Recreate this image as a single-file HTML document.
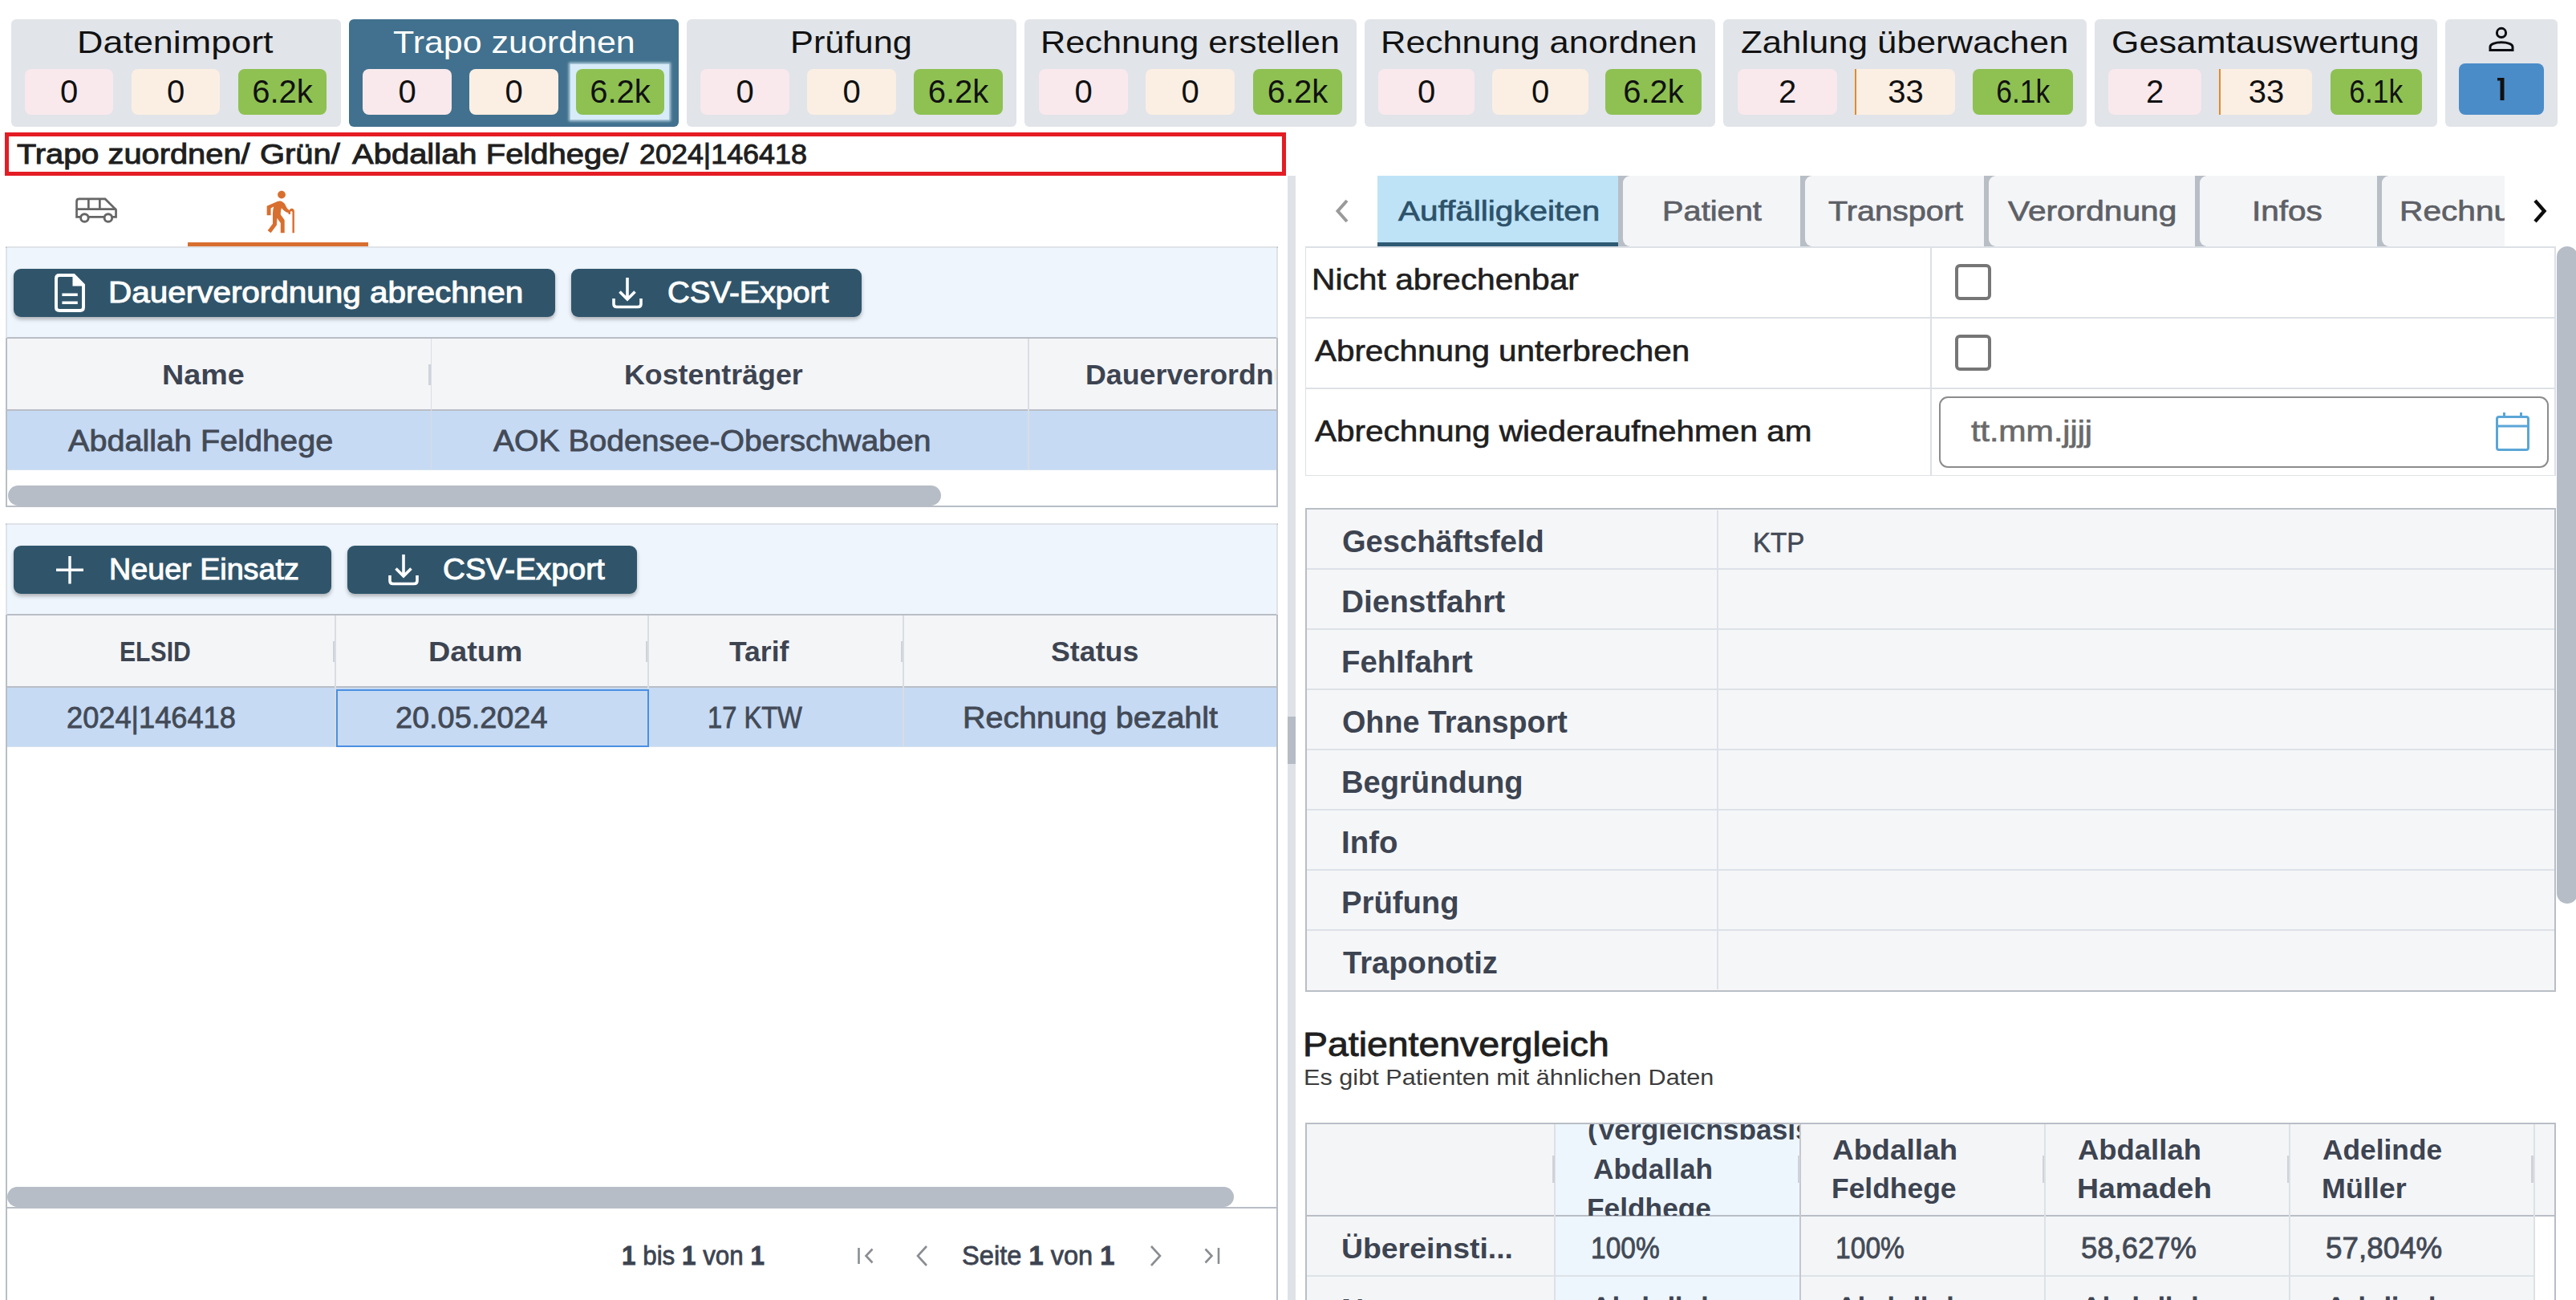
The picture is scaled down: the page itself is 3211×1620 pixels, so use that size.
<!DOCTYPE html>
<html><head><meta charset="utf-8">
<style>
html,body{margin:0;padding:0;background:#fff;width:3211px;height:1620px;overflow:hidden;position:relative;font-family:"Liberation Sans",sans-serif}
.b{position:absolute;box-sizing:border-box}
.t{position:absolute;white-space:nowrap;transform-origin:0 0;font-family:"Liberation Sans",sans-serif}
.card{position:absolute;top:24px;height:134px;background:#e1e4e9;border-radius:6px}
.pill{position:absolute;box-sizing:border-box;top:86px;height:57px;border-radius:8px;font-size:40px;line-height:57px;text-align:center;color:#111;font-family:"Liberation Sans",sans-serif}
.pk{background:#f9e9ec}.or{background:#fbefe3}.gr{background:#8ec152}
.btn{position:absolute;height:60px;background:#30556b;border-radius:9px;box-shadow:0 3px 5px rgba(0,0,0,0.28)}
.sb{position:absolute;background:#b6bdc6;border-radius:13px}
</style></head><body>
<!-- top cards -->
<div class="card" style="left:14px;width:411px"></div>
<div class="card" style="left:435px;width:411px;background:#41718e"></div>
<div class="card" style="left:856px;width:411px"></div>
<div class="card" style="left:1277px;width:414px"></div>
<div class="card" style="left:1701px;width:437px"></div>
<div class="card" style="left:2148px;width:453px"></div>
<div class="card" style="left:2611px;width:427px"></div>
<div class="card" style="left:3048px;width:140px"></div>
<!-- pills -->
<div class="pill pk" style="left:31px;width:110px">0</div>
<div class="pill or" style="left:164px;width:110px">0</div>
<div class="pill gr" style="left:297px;width:110px">6.2k</div>
<div class="pill pk" style="left:452px;width:111px">0</div>
<div class="pill or" style="left:585px;width:111px">0</div>
<div class="b" style="left:711px;top:80px;width:123px;height:69px;background:#d7ecf8;box-shadow:0 0 3px 2px rgba(215,236,248,0.8)"></div>
<div class="pill gr" style="left:718px;width:110px">6.2k</div>
<div class="pill pk" style="left:873px;width:111px">0</div>
<div class="pill or" style="left:1006px;width:111px">0</div>
<div class="pill gr" style="left:1139px;width:111px">6.2k</div>
<div class="pill pk" style="left:1295px;width:111px">0</div>
<div class="pill or" style="left:1428px;width:111px">0</div>
<div class="pill gr" style="left:1562px;width:111px">6.2k</div>
<div class="pill pk" style="left:1718px;width:120px">0</div>
<div class="pill or" style="left:1860px;width:120px">0</div>
<div class="pill gr" style="left:2001px;width:120px">6.2k</div>
<div class="pill pk" style="left:2166px;width:124px">2</div>
<div class="pill or" style="left:2312px;width:125px;border-left:2.5px solid #e08a2e;border-radius:0 8px 8px 0">33</div>
<div class="pill gr" style="left:2459px;width:125px"><span style="display:inline-block;transform:scaleX(0.886)">6.1k</span></div>
<div class="pill pk" style="left:2628px;width:116px">2</div>
<div class="pill or" style="left:2766px;width:116px;border-left:2.5px solid #e08a2e;border-radius:0 8px 8px 0">33</div>
<div class="pill gr" style="left:2905px;width:114px"><span style="display:inline-block;transform:scaleX(0.886)">6.1k</span></div>
<div class="pill" style="left:3065px;width:106px;top:79px;height:64px;line-height:64px;background:#4a8cc8"></div>
<svg class="b" style="left:3105px;top:92px" width="24" height="38" viewBox="0 0 24 38"><path d="M8 5 H16.5 V33 H11.5 V8.5 H8 Z" fill="#111"/></svg>
<!-- user icon -->
<svg class="b" style="left:3098px;top:30px" width="40" height="38" viewBox="0 0 40 38">
 <circle cx="20" cy="10.9" r="5.6" fill="none" stroke="#0b0d10" stroke-width="3"/>
 <path d="M6 32.5 V28.5 C6 25 12 22.8 20 22.8 C28 22.8 34 25 34 28.5 V32.5 Z" fill="none" stroke="#0b0d10" stroke-width="3" stroke-linejoin="miter"/>
</svg>
<!-- breadcrumb red box -->
<div class="b" style="left:6px;top:165px;width:1597px;height:54px;border:5px solid #e41c24"></div>
<!-- mode icons -->
<svg class="b" style="left:88px;top:240px" width="64" height="44" viewBox="0 0 64 44">
 <g fill="none" stroke="#666" stroke-width="2.7">
  <path d="M7.55 30.45 V11 Q7.55 7.95 10.6 7.95 H43.1 L56.55 21.4 V30.45 Z"/>
  <path d="M7.55 20.65 H56.55 M22.35 7.95 V20.65 M36.35 7.95 V20.65"/>
  <circle cx="17.4" cy="31.5" r="4.8" fill="#fff" stroke-width="2.9"/>
  <circle cx="46.9" cy="31.5" r="4.8" fill="#fff" stroke-width="2.9"/>
 </g>
</svg>
<svg class="b" style="left:318px;top:234px" width="58.7" height="58.7" viewBox="0 0 24 24">
 <path fill="#d86f2f" d="M13.5 5.5c1.1 0 2-.9 2-2s-.9-2-2-2-2 .9-2 2 .9 2 2 2zM20 12.5V23h-1V12.5c0-.28-.22-.5-.5-.5s-.5.22-.5.5v1h-1v-.69c-1.46-.38-2.7-1.29-3.51-2.52-.31.87-.49 1.78-.49 2.71 0 .23.02.46.03.69L15 16.5V23h-2v-5l-1.78-2.54L11 19l-3 4-1.6-1.2L9 18.33V13c0-1.15.18-2.29.5-3.39L8 10.46V14H6V9.3l5.4-2.35c.59-.26 1.25-.3 1.87-.11.9.28 1.66.91 2.06 1.76.34.72.81 2.1 2.17 2.87.08-.53.54-.97 1.1-.97.83 0 1.4.72 1.4 1.5z"/>
</svg>
<div class="b" style="left:234px;top:302px;width:225px;height:5px;background:#d86f2f"></div>

<!-- LEFT PANEL 1 -->
<div class="b" style="left:6.5px;top:307px;width:1586px;height:324.5px;border:2px solid #b8bec6;border-top-color:#dfe3e8;background:#fff"></div>
<div class="b" style="left:8.5px;top:309px;width:1582px;height:112px;background:#eef5fc"></div>
<div class="b" style="left:6.5px;top:309px;width:2px;height:112px;background:#dfe3e8"></div>
<div class="b" style="left:1590.5px;top:309px;width:2px;height:112px;background:#dfe3e8"></div>
<div class="b" style="left:8.5px;top:420px;width:1582px;height:92px;background:#f4f5f7;border-top:2px solid #b9bec6;border-bottom:2px solid #b9bec6"></div>
<div class="b" style="left:8.5px;top:512px;width:1582px;height:74px;background:#c6daf4;border-bottom:1px solid #d5e1ef"></div>
<div class="b" style="left:536.5px;top:422px;width:1.5px;height:164px;background:#d9dde3"></div>
<div class="b" style="left:1281px;top:422px;width:1.5px;height:164px;background:#d9dde3"></div>
<div class="b" style="left:534px;top:454px;width:2.5px;height:26px;background:#d0d4da"></div>
<div class="sb" style="left:10px;top:605px;width:1163px;height:25px"></div>
<div class="btn" style="left:17px;top:335px;width:675px"></div>
<div class="btn" style="left:712px;top:335px;width:362px"></div>
<!-- doc icon -->
<svg class="b" style="left:66px;top:339px" width="42" height="52" viewBox="0 0 42 52">
 <path d="M4 8 Q4 4 8 4 H26 L38 16 V44 Q38 48 34 48 H8 Q4 48 4 44 Z" fill="none" stroke="#fff" stroke-width="3.9" stroke-linejoin="miter"/>
 <path d="M24.5 3 V17.5 H39 V16 L26.5 3 Z" fill="#fff"/>
 <path d="M11.4 28.3 H30.8 M11.4 38.2 H30.8" stroke="#fff" stroke-width="3.6"/>
</svg>
<!-- download icon -->
<svg class="b" style="left:760px;top:344px" width="44" height="42" viewBox="0 0 44 42">
 <path d="M22 2 V29 M12.5 19.5 L22 29 L31.5 19.5" fill="none" stroke="#fff" stroke-width="3.6"/>
 <path d="M5 28 V35 Q5 38.5 9 38.5 H35 Q39 38.5 39 35 V28" fill="none" stroke="#fff" stroke-width="3.6"/>
</svg>

<!-- LEFT PANEL 2 -->
<div class="b" style="left:6.5px;top:652px;width:1586px;height:1000px;border:2px solid #b8bec6;border-top-color:#dfe3e8;background:#fff"></div>
<div class="b" style="left:8.5px;top:654px;width:1582px;height:112px;background:#eef5fc"></div>
<div class="b" style="left:6.5px;top:654px;width:2px;height:112px;background:#dfe3e8"></div>
<div class="b" style="left:1590.5px;top:654px;width:2px;height:112px;background:#dfe3e8"></div>
<div class="b" style="left:8.5px;top:765px;width:1582px;height:92px;background:#f4f5f7;border-top:2px solid #b9bec6;border-bottom:2px solid #b9bec6"></div>
<div class="b" style="left:8.5px;top:857px;width:1582px;height:74px;background:#c6daf4;border-bottom:1px solid #d5e1ef"></div>
<div class="b" style="left:417px;top:767px;width:1.5px;height:164px;background:#d9dde3"></div>
<div class="b" style="left:807px;top:767px;width:1.5px;height:164px;background:#d9dde3"></div>
<div class="b" style="left:1125px;top:767px;width:1.5px;height:164px;background:#d9dde3"></div>
<div class="b" style="left:414.5px;top:799px;width:2.5px;height:26px;background:#d0d4da"></div>
<div class="b" style="left:804.5px;top:799px;width:2.5px;height:26px;background:#d0d4da"></div>
<div class="b" style="left:1122.5px;top:799px;width:2.5px;height:26px;background:#d0d4da"></div>
<div class="b" style="left:419px;top:858.5px;width:389.5px;height:72.5px;border:2px solid #4a8fe2"></div>
<div class="sb" style="left:9px;top:1479px;width:1529px;height:25px"></div>
<div class="b" style="left:8.5px;top:1504px;width:1582px;height:1.5px;background:#b8bec6"></div>
<div class="btn" style="left:17px;top:680px;width:396px"></div>
<div class="btn" style="left:433px;top:680px;width:361px"></div>
<!-- plus icon -->
<svg class="b" style="left:68px;top:690px" width="38" height="40" viewBox="0 0 38 40">
 <path d="M19 3 V37.5 M2 20.25 H36" stroke="#fff" stroke-width="3.4"/>
</svg>
<svg class="b" style="left:481px;top:689px" width="44" height="42" viewBox="0 0 44 42">
 <path d="M22 2 V29 M12.5 19.5 L22 29 L31.5 19.5" fill="none" stroke="#fff" stroke-width="3.6"/>
 <path d="M5 28 V35 Q5 38.5 9 38.5 H35 Q39 38.5 39 35 V28" fill="none" stroke="#fff" stroke-width="3.6"/>
</svg>
<!-- pagination icons -->
<svg class="b" style="left:1060px;top:1548px" width="470" height="34" viewBox="0 0 470 34">
 <g fill="none" stroke="#8a8d92" stroke-width="2.6">
  <path d="M10.5 7 V27"/><path d="M27.5 8.5 L19.5 17 L27.5 25.5"/>
  <path d="M95 5 L84 17 L95 29"/>
  <path d="M375 5 L386 17 L375 29"/>
  <path d="M442.5 8.5 L450.5 17 L442.5 25.5"/><path d="M459 7 V27"/>
 </g>
</svg>

<!-- splitter -->
<div class="b" style="left:1605px;top:219px;width:10px;height:1401px;background:#dfe2e7"></div>
<div class="b" style="left:1605px;top:893px;width:10px;height:59px;background:#b5bcc5"></div>

<!-- RIGHT: tabs -->
<svg class="b" style="left:1655px;top:244px" width="34" height="38" viewBox="0 0 34 38">
 <path d="M24 6 L12.5 19 L24 32" fill="none" stroke="#9a9a9a" stroke-width="4"/>
</svg>
<svg class="b" style="left:3150px;top:244px" width="34" height="38" viewBox="0 0 34 38">
 <path d="M10 6 L21.5 19 L10 32" fill="none" stroke="#0d0d0d" stroke-width="4.4"/>
</svg>
<div class="b" style="left:1717px;top:219px;width:301px;height:88px;background:#bee3f7;border-bottom:5px solid #2f5a73"></div>
<div class="b" style="left:2017px;top:219px;width:1105px;height:88px;overflow:hidden">
 <div class="b" style="left:0px;top:0;width:14px;height:88px;background:#b8bec6"></div>
 <div class="b" style="left:6px;top:0;width:221px;height:88px;background:#f4f5f7;border-radius:9px 0 0 9px"></div>
 <div class="b" style="left:227px;top:0;width:14px;height:88px;background:#b8bec6"></div>
 <div class="b" style="left:233px;top:0;width:223px;height:88px;background:#f4f5f7;border-radius:9px 0 0 9px"></div>
 <div class="b" style="left:456px;top:0;width:14px;height:88px;background:#b8bec6"></div>
 <div class="b" style="left:462px;top:0;width:257px;height:88px;background:#f4f5f7;border-radius:9px 0 0 9px"></div>
 <div class="b" style="left:719px;top:0;width:14px;height:88px;background:#b8bec6"></div>
 <div class="b" style="left:725px;top:0;width:221px;height:88px;background:#f4f5f7;border-radius:9px 0 0 9px"></div>
 <div class="b" style="left:946px;top:0;width:14px;height:88px;background:#b8bec6"></div>
 <div class="b" style="left:952px;top:0;width:231px;height:88px;background:#f4f5f7;border-radius:9px 0 0 9px"></div>
<div class='t' style='left:973.76px;top:26.65px;font-size:34.5px;line-height:34.5px;color:#5d6066;font-weight:400;transform:scaleX(1.1791);-webkit-text-stroke:0.7px #5d6066'>Rechnung</div>
</div>
<div class="b" style="left:1627px;top:307px;width:1559px;height:2px;background:#dde1e6"></div>

<!-- form table -->
<div class="b" style="left:1627px;top:308px;width:1559px;height:285px;border:1.5px solid #dde1e6;border-right-width:2px"></div>
<div class="b" style="left:1628px;top:394.5px;width:1557px;height:2px;background:#dde1e6"></div>
<div class="b" style="left:1628px;top:483px;width:1557px;height:2px;background:#dde1e6"></div>
<div class="b" style="left:2406px;top:309px;width:2px;height:283px;background:#dde1e6"></div>
<div class="b" style="left:2436.5px;top:328.5px;width:45px;height:45px;border:4.5px solid #767676;border-radius:6px"></div>
<div class="b" style="left:2436.5px;top:416.5px;width:45px;height:45px;border:4.5px solid #767676;border-radius:6px"></div>
<div class="b" style="left:2416.5px;top:494px;width:760px;height:88.5px;border:2px solid #8c8c8c;border-radius:11px"></div>
<svg class="b" style="left:3108px;top:511px" width="48" height="54" viewBox="0 0 48 54">
 <rect x="4.5" y="8.5" width="39" height="41" rx="2.5" fill="none" stroke="#5aa6d7" stroke-width="3"/>
 <path d="M4.5 20 H43.5 M13.5 3 V9 M34.5 3 V9" stroke="#5aa6d7" stroke-width="3"/>
</svg>

<!-- info table -->
<div class="b" style="left:1627px;top:633px;width:1559px;height:603px;background:#f5f6f8;border:2px solid #b9bec6;border-top-width:2.5px"></div>
<div class="b" style="left:1629px;top:708px;width:1555px;height:2px;background:#dde2e8"></div>
<div class="b" style="left:1629px;top:783px;width:1555px;height:2px;background:#dde2e8"></div>
<div class="b" style="left:1629px;top:858px;width:1555px;height:2px;background:#dde2e8"></div>
<div class="b" style="left:1629px;top:933px;width:1555px;height:2px;background:#dde2e8"></div>
<div class="b" style="left:1629px;top:1008px;width:1555px;height:2px;background:#dde2e8"></div>
<div class="b" style="left:1629px;top:1083px;width:1555px;height:2px;background:#dde2e8"></div>
<div class="b" style="left:1629px;top:1158px;width:1555px;height:2px;background:#dde2e8"></div>
<div class="b" style="left:2140px;top:636px;width:2px;height:597px;background:#dde2e8"></div>

<!-- compare table -->
<div class="b" style="left:1627px;top:1398.5px;width:1559px;height:300px;background:#fff;border:2px solid #b9bec6"></div>
<div class="b" style="left:1629px;top:1400.5px;width:1555px;height:115px;background:#f4f5f7"></div>
<div class="b" style="left:1629px;top:1515.5px;width:1529px;height:200px;background:#f4f5f7"></div>
<div class="b" style="left:1938px;top:1400.5px;width:306px;height:300px;background:#eef6fd"></div>
<div class="b" style="left:1629px;top:1513.5px;width:1555px;height:2px;background:#b9bec6"></div>
<div class="b" style="left:1629px;top:1589px;width:1529px;height:2px;background:#dde2e8"></div>
<div class="b" style="left:1937px;top:1400.5px;width:2px;height:300px;background:#dde1e6"></div>
<div class="b" style="left:2243px;top:1400.5px;width:2px;height:300px;background:#c3c8cf"></div>
<div class="b" style="left:2547.5px;top:1400.5px;width:2px;height:300px;background:#dde1e6"></div>
<div class="b" style="left:2852.5px;top:1400.5px;width:2px;height:300px;background:#dde1e6"></div>
<div class="b" style="left:3157.5px;top:1400.5px;width:2px;height:300px;background:#dde1e6"></div>
<div class="b" style="left:1935px;top:1440px;width:2.5px;height:34px;background:#cfd3d9"></div>
<div class="b" style="left:2241px;top:1440px;width:2.5px;height:34px;background:#cfd3d9"></div>
<div class="b" style="left:2545.5px;top:1440px;width:2.5px;height:34px;background:#cfd3d9"></div>
<div class="b" style="left:2850.5px;top:1440px;width:2.5px;height:34px;background:#cfd3d9"></div>
<div class="b" style="left:3155px;top:1440px;width:2.5px;height:34px;background:#cfd3d9"></div>
<!-- clipped base column header -->
<div class="b" style="left:1939px;top:1400.5px;width:304px;height:114px;overflow:hidden">
<div class='t' style='left:40.28px;top:-10.08px;font-size:35px;line-height:35px;color:#3d4451;font-weight:700;transform:scaleX(1.0089);'>(Vergleichsbasis)</div>
<div class='t' style='left:47.49px;top:38.92px;font-size:35px;line-height:35px;color:#3d4451;font-weight:700;transform:scaleX(1.0089);'>Abdallah</div>
<div class='t' style='left:38.98px;top:87.92px;font-size:35px;line-height:35px;color:#3d4451;font-weight:700;transform:scaleX(1.0089);'>Feldhege</div>
</div>
<!-- right scrollbar -->
<div class="sb" style="left:3187px;top:307px;width:26px;height:819px;border-radius:13px"></div>

<!-- left header clipped -->
<div class="b" style="left:1282px;top:420px;width:308px;height:92px;overflow:hidden">
<div class='t' style='left:70.93px;top:29.85px;font-size:34.5px;line-height:34.5px;color:#3d4451;font-weight:700;transform:scaleX(1.0373);'>Dauerverordnung</div>
</div>
<div class='t' style='left:95.59px;top:32.62px;font-size:39.5px;line-height:39.5px;color:#121212;font-weight:400;transform:scaleX(1.1368);'>Datenimport</div>
<div class='t' style='left:489.91px;top:32.62px;font-size:39.5px;line-height:39.5px;color:#ffffff;font-weight:400;transform:scaleX(1.0876);'>Trapo zuordnen</div>
<div class='t' style='left:985.21px;top:32.62px;font-size:39.5px;line-height:39.5px;color:#121212;font-weight:400;transform:scaleX(1.0977);'>Prüfung</div>
<div class='t' style='left:1296.71px;top:32.62px;font-size:39.5px;line-height:39.5px;color:#121212;font-weight:400;transform:scaleX(1.0955);'>Rechnung erstellen</div>
<div class='t' style='left:1720.69px;top:32.62px;font-size:39.5px;line-height:39.5px;color:#121212;font-weight:400;transform:scaleX(1.1020);'>Rechnung anordnen</div>
<div class='t' style='left:2170.39px;top:32.62px;font-size:39.5px;line-height:39.5px;color:#121212;font-weight:400;transform:scaleX(1.1066);'>Zahlung überwachen</div>
<div class='t' style='left:2632.26px;top:32.62px;font-size:39.5px;line-height:39.5px;color:#121212;font-weight:400;transform:scaleX(1.1198);'>Gesamtauswertung</div>
<div class='t' style='left:21.00px;top:175.00px;font-size:35.5px;line-height:35.5px;color:#1f1f1f;font-weight:400;transform:scaleX(1.1212);-webkit-text-stroke:1.0px #1f1f1f;'>Trapo zuordnen/</div>
<div class='t' style='left:323.88px;top:175.00px;font-size:35.5px;line-height:35.5px;color:#1f1f1f;font-weight:400;transform:scaleX(1.1236);-webkit-text-stroke:1.0px #1f1f1f;'>Grün/</div>
<div class='t' style='left:438.75px;top:175.00px;font-size:35.5px;line-height:35.5px;color:#1f1f1f;font-weight:400;transform:scaleX(1.1262);-webkit-text-stroke:1.0px #1f1f1f;'>Abdallah Feldhege/</div>
<div class='t' style='left:796.74px;top:175.00px;font-size:35.5px;line-height:35.5px;color:#1f1f1f;font-weight:400;transform:scaleX(1.0110);-webkit-text-stroke:1.0px #1f1f1f;'>2024|146418</div>
<div class='t' style='left:135.25px;top:346.58px;font-size:36px;line-height:36px;color:#ffffff;font-weight:400;transform:scaleX(1.1236);-webkit-text-stroke:1.0px #ffffff;'>Dauerverordnung abrechnen</div>
<div class='t' style='left:831.53px;top:346.58px;font-size:36px;line-height:36px;color:#ffffff;font-weight:400;transform:scaleX(1.0690);-webkit-text-stroke:1.0px #ffffff;'>CSV-Export</div>
<div class='t' style='left:135.81px;top:691.58px;font-size:36px;line-height:36px;color:#ffffff;font-weight:400;transform:scaleX(1.0471);-webkit-text-stroke:1.0px #ffffff;'>Neuer Einsatz</div>
<div class='t' style='left:551.73px;top:691.58px;font-size:36px;line-height:36px;color:#ffffff;font-weight:400;transform:scaleX(1.0727);-webkit-text-stroke:1.0px #ffffff;'>CSV-Export</div>
<div class='t' style='left:201.51px;top:449.85px;font-size:34.5px;line-height:34.5px;color:#3d4451;font-weight:700;transform:scaleX(1.0934);'>Name</div>
<div class='t' style='left:778.43px;top:449.85px;font-size:34.5px;line-height:34.5px;color:#3d4451;font-weight:700;transform:scaleX(1.0373);'>Kostenträger</div>
<div class='t' style='left:85.40px;top:532.08px;font-size:36px;line-height:36px;color:#434a56;font-weight:400;transform:scaleX(1.0997);-webkit-text-stroke:0.8px #434a56;'>Abdallah Feldhege</div>
<div class='t' style='left:614.90px;top:532.08px;font-size:36px;line-height:36px;color:#434a56;font-weight:400;transform:scaleX(1.0860);-webkit-text-stroke:0.8px #434a56;'>AOK Bodensee-Oberschwaben</div>
<div class='t' style='left:148.55px;top:794.85px;font-size:34.5px;line-height:34.5px;color:#3d4451;font-weight:700;transform:scaleX(0.8745);'>ELSID</div>
<div class='t' style='left:533.81px;top:794.85px;font-size:34.5px;line-height:34.5px;color:#3d4451;font-weight:700;transform:scaleX(1.0933);'>Datum</div>
<div class='t' style='left:909.30px;top:794.85px;font-size:34.5px;line-height:34.5px;color:#3d4451;font-weight:700;transform:scaleX(1.0301);'>Tarif</div>
<div class='t' style='left:1309.56px;top:794.85px;font-size:34.5px;line-height:34.5px;color:#3d4451;font-weight:700;transform:scaleX(1.0369);'>Status</div>
<div class='t' style='left:82.89px;top:877.08px;font-size:36px;line-height:36px;color:#434a56;font-weight:400;transform:scaleX(1.0062);-webkit-text-stroke:0.8px #434a56;'>2024|146418</div>
<div class='t' style='left:492.75px;top:877.08px;font-size:36px;line-height:36px;color:#434a56;font-weight:400;transform:scaleX(1.0514);-webkit-text-stroke:0.8px #434a56;'>20.05.2024</div>
<div class='t' style='left:882.09px;top:877.08px;font-size:36px;line-height:36px;color:#434a56;font-weight:400;transform:scaleX(0.9070);-webkit-text-stroke:0.8px #434a56;'>17 KTW</div>
<div class='t' style='left:1199.71px;top:877.08px;font-size:36px;line-height:36px;color:#434a56;font-weight:400;transform:scaleX(1.0958);-webkit-text-stroke:0.8px #434a56;'>Rechnung bezahlt</div>
<div class='t' style='left:774.65px;top:1547.27px;font-size:34px;line-height:34px;color:#3d4451;font-weight:400;transform:scaleX(0.9228);-webkit-text-stroke:0.8px #3d4451;'><b>1</b> bis <b>1</b> von <b>1</b></div>
<div class='t' style='left:1199.04px;top:1547.27px;font-size:34px;line-height:34px;color:#3d4451;font-weight:400;transform:scaleX(0.9594);-webkit-text-stroke:0.8px #3d4451;'>Seite <b>1</b> von <b>1</b></div>
<div class='t' style='left:1743.30px;top:245.65px;font-size:34.5px;line-height:34.5px;color:#2d526a;font-weight:400;transform:scaleX(1.1737);-webkit-text-stroke:0.7px #2d526a;'>Auffälligkeiten</div>
<div class='t' style='left:2071.69px;top:245.65px;font-size:34.5px;line-height:34.5px;color:#5d6066;font-weight:400;transform:scaleX(1.1538);-webkit-text-stroke:0.7px #5d6066;'>Patient</div>
<div class='t' style='left:2279.00px;top:245.65px;font-size:34.5px;line-height:34.5px;color:#5d6066;font-weight:400;transform:scaleX(1.1476);-webkit-text-stroke:0.7px #5d6066;'>Transport</div>
<div class='t' style='left:2503.30px;top:245.65px;font-size:34.5px;line-height:34.5px;color:#5d6066;font-weight:400;transform:scaleX(1.1791);-webkit-text-stroke:0.7px #5d6066;'>Verordnung</div>
<div class='t' style='left:2807.38px;top:245.65px;font-size:34.5px;line-height:34.5px;color:#5d6066;font-weight:400;transform:scaleX(1.1746);-webkit-text-stroke:0.7px #5d6066;'>Infos</div>
<div class='t' style='left:1635.20px;top:329.74px;font-size:37px;line-height:37px;color:#202020;font-weight:400;transform:scaleX(1.1010);-webkit-text-stroke:0.6px #202020;'>Nicht abrechenbar</div>
<div class='t' style='left:1638.50px;top:418.74px;font-size:37px;line-height:37px;color:#202020;font-weight:400;transform:scaleX(1.0918);-webkit-text-stroke:0.6px #202020;'>Abrechnung unterbrechen</div>
<div class='t' style='left:1638.50px;top:518.74px;font-size:37px;line-height:37px;color:#202020;font-weight:400;transform:scaleX(1.0952);-webkit-text-stroke:0.6px #202020;'>Abrechnung wiederaufnehmen am</div>
<div class='t' style='left:2457.00px;top:518.74px;font-size:37px;line-height:37px;color:#6a6a6a;font-weight:400;transform:scaleX(1.1127);-webkit-text-stroke:0.7px #6a6a6a;'>tt.mm.jjjj</div>
<div class='t' style='left:1673.30px;top:655.69px;font-size:38px;line-height:38px;color:#3d4451;font-weight:700;transform:scaleX(1.0020);'>Geschäftsfeld</div>
<div class='t' style='left:1672.26px;top:730.69px;font-size:38px;line-height:38px;color:#3d4451;font-weight:700;transform:scaleX(1.0177);'>Dienstfahrt</div>
<div class='t' style='left:1672.28px;top:805.69px;font-size:38px;line-height:38px;color:#3d4451;font-weight:700;transform:scaleX(1.0081);'>Fehlfahrt</div>
<div class='t' style='left:1673.31px;top:880.69px;font-size:38px;line-height:38px;color:#3d4451;font-weight:700;transform:scaleX(0.9929);'>Ohne Transport</div>
<div class='t' style='left:1672.29px;top:955.69px;font-size:38px;line-height:38px;color:#3d4451;font-weight:700;transform:scaleX(1.0032);'>Begründung</div>
<div class='t' style='left:1672.28px;top:1030.69px;font-size:38px;line-height:38px;color:#3d4451;font-weight:700;transform:scaleX(1.0106);'>Info</div>
<div class='t' style='left:1672.29px;top:1105.69px;font-size:38px;line-height:38px;color:#3d4451;font-weight:700;transform:scaleX(1.0064);'>Prüfung</div>
<div class='t' style='left:1674.30px;top:1180.69px;font-size:38px;line-height:38px;color:#3d4451;font-weight:700;transform:scaleX(1.0042);'>Traponotiz</div>
<div class='t' style='left:2185.01px;top:657.92px;font-size:35px;line-height:35px;color:#434a56;font-weight:400;transform:scaleX(0.9462);-webkit-text-stroke:0.6px #434a56;'>KTP</div>
<div class='t' style='left:1624.09px;top:1280.51px;font-size:42px;line-height:42px;color:#1f1f1f;font-weight:400;transform:scaleX(1.1050);-webkit-text-stroke:0.9px #1f1f1f;'>Patientenvergleich</div>
<div class='t' style='left:1625.21px;top:1328.84px;font-size:28px;line-height:28px;color:#3c3c3c;font-weight:400;transform:scaleX(1.0952);'>Es gibt Patienten mit ähnlichen Daten</div>
<div class='t' style='left:2284.14px;top:1415.42px;font-size:35px;line-height:35px;color:#3d4451;font-weight:700;transform:scaleX(1.0566);'>Abdallah</div>
<div class='t' style='left:2283.18px;top:1462.92px;font-size:35px;line-height:35px;color:#3d4451;font-weight:700;transform:scaleX(1.0119);'>Feldhege</div>
<div class='t' style='left:2589.96px;top:1415.42px;font-size:35px;line-height:35px;color:#3d4451;font-weight:700;transform:scaleX(1.0414);'>Abdallah</div>
<div class='t' style='left:2588.86px;top:1463.42px;font-size:35px;line-height:35px;color:#3d4451;font-weight:700;transform:scaleX(1.0675);'>Hamadeh</div>
<div class='t' style='left:2894.99px;top:1415.42px;font-size:35px;line-height:35px;color:#3d4451;font-weight:700;transform:scaleX(1.0089);'>Adelinde</div>
<div class='t' style='left:2893.95px;top:1463.42px;font-size:35px;line-height:35px;color:#3d4451;font-weight:700;transform:scaleX(1.0248);'>Müller</div>
<div class='t' style='left:1672.26px;top:1537.92px;font-size:35px;line-height:35px;color:#3d4451;font-weight:700;transform:scaleX(1.0679);'>Übereinsti...</div>
<div class='t' style='left:1982.59px;top:1536.73px;font-size:37px;line-height:37px;color:#434a56;font-weight:400;transform:scaleX(0.9065);-webkit-text-stroke:0.8px #434a56;'>100%</div>
<div class='t' style='left:2288.18px;top:1536.73px;font-size:37px;line-height:37px;color:#434a56;font-weight:400;transform:scaleX(0.9087);-webkit-text-stroke:0.8px #434a56;'>100%</div>
<div class='t' style='left:2593.71px;top:1536.73px;font-size:37px;line-height:37px;color:#434a56;font-weight:400;transform:scaleX(0.9861);-webkit-text-stroke:0.8px #434a56;'>58,627%</div>
<div class='t' style='left:2899.40px;top:1536.73px;font-size:37px;line-height:37px;color:#434a56;font-weight:400;transform:scaleX(0.9951);-webkit-text-stroke:0.8px #434a56;'>57,804%</div>
<div class='t' style='left:1672.40px;top:1613.42px;font-size:35px;line-height:35px;color:#3d4451;font-weight:700;transform:scaleX(1.12);'>Name</div>
<div class='t' style='left:1982.40px;top:1611.73px;font-size:37px;line-height:37px;color:#3d4451;font-weight:400;transform:scaleX(1.12);-webkit-text-stroke:1px #3d4451'>Abdallah</div>
<div class='t' style='left:2288.00px;top:1611.73px;font-size:37px;line-height:37px;color:#3d4451;font-weight:400;transform:scaleX(1.12);-webkit-text-stroke:1px #3d4451'>Abdallah</div>
<div class='t' style='left:2592.70px;top:1611.73px;font-size:37px;line-height:37px;color:#3d4451;font-weight:400;transform:scaleX(1.12);-webkit-text-stroke:1px #3d4451'>Abdallah</div>
<div class='t' style='left:2898.40px;top:1611.73px;font-size:37px;line-height:37px;color:#3d4451;font-weight:400;transform:scaleX(1.12);-webkit-text-stroke:1px #3d4451'>Adelinde</div>
</body></html>
